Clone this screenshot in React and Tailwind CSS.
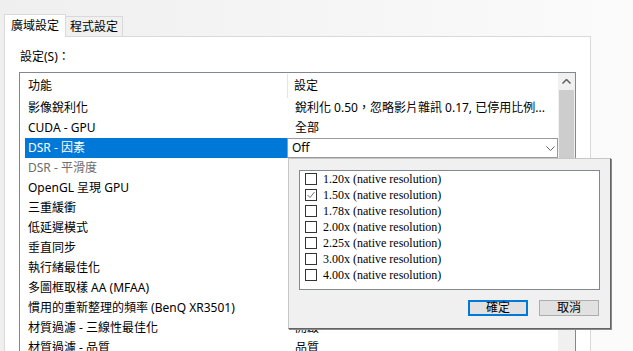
import React from 'react';

const rows = [
  { name: '影像銳利化', value: '銳利化 0.50，忽略影片雜訊 0.17, 已停用比例...' },
  { name: 'CUDA - GPU', value: '全部' },
  { name: 'DSR - 因素', value: 'Off', selected: true },
  { name: 'DSR - 平滑度', value: '', disabled: true },
  { name: 'OpenGL 呈現 GPU', value: '' },
  { name: '三重緩衝', value: '' },
  { name: '低延遲模式', value: '' },
  { name: '垂直同步', value: '' },
  { name: '執行緒最佳化', value: '' },
  { name: '多圖框取樣 AA (MFAA)', value: '' },
  { name: '慣用的重新整理的頻率 (BenQ XR3501)', value: '' },
  { name: '材質過濾 - 三線性最佳化', value: '開啟' },
  { name: '材質過濾 - 品質', value: '品質' },
];

const factors = ['1.20x', '1.50x', '1.78x', '2.00x', '2.25x', '3.00x', '4.00x'];

const ChevronDown = () => (
  <svg width="9" height="5" viewBox="0 0 9 5" className="shrink-0">
    <path d="M0.5 0.5 L4.5 4.5 L8.5 0.5" fill="none" stroke="#606060" strokeWidth="1" />
  </svg>
);

const ChevronUp = () => (
  <svg width="9" height="5" viewBox="0 0 9 5">
    <path d="M0.5 4.5 L4.5 0.5 L8.5 4.5" fill="none" stroke="#606060" strokeWidth="1.5" />
  </svg>
);

const Row = ({ row }) => (
  <div className="flex h-[20px] items-center">
    <div
      className={`flex h-full w-[262px] shrink-0 items-center pl-[3px] ${
        row.selected ? 'bg-[#0078d7] text-white' : row.disabled ? 'text-[#6d6d6d]' : 'text-black'
      }`}
    >
      <span className="whitespace-nowrap">{row.name}</span>
    </div>
    {row.selected ? (
      <div className="flex h-full flex-1 items-center justify-between border border-[#9a9a9a] bg-white pl-[4px] pr-[2px]">
        <span>Off</span>
        <ChevronDown />
      </div>
    ) : (
      <div className="flex-1 truncate pl-[8px] text-black">{row.value}</div>
    )}
  </div>
);

export default function App() {
  return (
    <div
      className="relative h-[351px] w-[633px] overflow-hidden bg-gradient-to-r from-[#efefef] to-[#fbfbfb] pl-[4px] pt-[14px] text-[12px] leading-[20px] text-black"
      style={{ fontFamily: '"Noto Sans", "Noto Sans CJK TC", sans-serif' }}
    >
      {/* Tabs */}
      <div className="flex items-end">
        <div className="relative z-10 -mb-px flex h-[23px] items-center border border-b-0 border-[#d9d9d9] bg-white px-[6px]">
          廣域設定
        </div>
        <div className="flex h-[20px] items-center border border-l-0 border-b-0 border-[#d9d9d9] bg-[#f0f0f0] px-[4px]">
          程式設定
        </div>
      </div>

      {/* Panel */}
      <div className="h-[330px] w-[587px] border border-[#d9d9d9] bg-white px-[14px] pt-[10px]">
        <div className="ml-px h-[20px]">設定(S)：</div>
        <div className="mt-[5px] flex h-[300px] w-[557px] border border-[#828790] bg-white">
          <div className="flex-1 pl-[5px]">
            <div className="flex h-[25px] items-center">
              <div className="flex h-[24px] w-[263px] shrink-0 items-center border-r border-[#e5e5e5] pl-[3px]">
                功能
              </div>
              <div className="pl-[6px]">設定</div>
            </div>
            {rows.map((row) => (
              <Row key={row.name} row={row} />
            ))}
          </div>
          {/* Scrollbar */}
          <div className="flex w-[17px] flex-col bg-[#f0f0f0]">
            <div className="flex h-[17px] items-center justify-center">
              <ChevronUp />
            </div>
            <div className="mx-px h-[230px] bg-[#cdcdcd]" />
          </div>
        </div>
      </div>

      {/* Dropdown popup */}
      <div className="absolute left-[288px] top-[158px] flex h-[171px] w-[323px] flex-col border border-[#c6c6c6] border-b-[#646464] border-r-[#646464] bg-[#f0f0f0] shadow-[1px_1px_0_#8a8a8a]">
        <div className="ml-[10px] mt-[11px] h-[120px] w-[301px] border border-[#828790] bg-white">
          {factors.map((f) => (
            <div
              key={f}
              className="flex h-[16px] items-center pl-[5px]"
              style={{ fontFamily: '"Liberation Serif", serif' }}
            >
              <div className="flex h-[12px] w-[12px] items-center justify-center border border-[#333333] bg-white">
                {f === '1.50x' && (
                  <svg width="10" height="10" viewBox="0 0 10 10">
                    <path d="M1.5 5 L4 7.5 L8.5 2" fill="none" stroke="#707070" strokeWidth="1" />
                  </svg>
                )}
              </div>
              <span className="ml-[6px] text-[12px] leading-[16px]">{f} (native resolution)</span>
            </div>
          ))}
        </div>
        <div className="ml-[179px] mt-[10px] flex gap-[11px]">
          <button className="flex h-[16px] w-[60px] items-center justify-center border-2 border-[#0078d7] bg-[#e1e1e1] text-[12px] leading-none">
            確定
          </button>
          <button className="flex h-[16px] w-[60px] items-center justify-center border border-[#adadad] bg-[#e1e1e1] text-[12px] leading-none">
            取消
          </button>
        </div>
      </div>
    </div>
  );
}
